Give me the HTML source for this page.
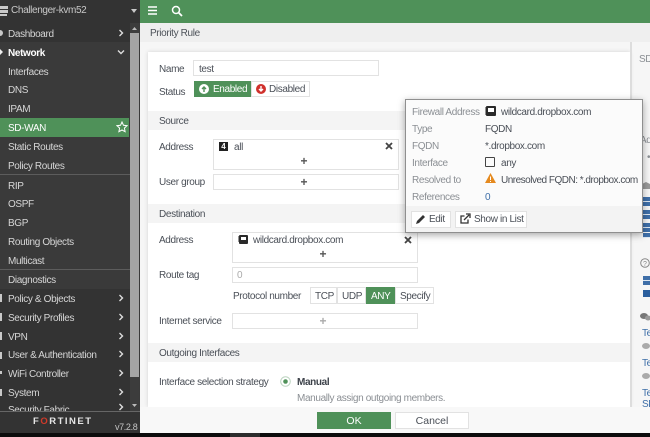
<!DOCTYPE html>
<html><head><meta charset="utf-8">
<style>
html,body{margin:0;padding:0}
body{width:650px;height:437px;overflow:hidden;position:relative;background:#fafafa;font-family:"Liberation Sans",sans-serif;font-size:10px;color:#4a4f57}
.a{position:absolute}
.t{position:absolute;white-space:nowrap;line-height:14px;height:14px;font-size:10px;margin-top:2px;letter-spacing:-.36px}
.n{color:#d6d6d6;left:8px}
.b{position:absolute;box-sizing:border-box;background:#fff;border:1px solid #e2e2e2}
.sec{position:absolute;left:148px;width:482px;height:19px;background:#f4f4f4}
.l{color:#4a4f57}
.g{color:#8b8f94}
.p{position:absolute;color:#555;font-size:12px;font-weight:bold;line-height:12px;width:12px;text-align:center}
.bl{position:absolute;left:643px;width:7px;background:#3f6fa8;border-top:0}
.bl:after{content:"";position:absolute;left:0;right:0;top:4px;height:1px;background:#dfe8f2}
</style></head><body>

<!-- sidebar -->
<div class="a" style="left:0;top:0;width:140px;height:433px;background:#3a3a3a"></div>
<div class="a" style="left:0;top:0;width:140px;height:23px;background:#333"></div>
<div class="a" style="left:0;top:23px;width:130px;height:19px;background:#333"></div>
<div class="a" style="left:0;top:289px;width:130px;height:122px;background:#333"></div>
<div class="a" style="left:130px;top:23px;width:9px;height:388px;background:#3c3c3c"></div>
<div class="a" style="left:130px;top:33px;width:9px;height:344px;background:#a4a4a4"></div>
<div class="a" style="left:0;top:118px;width:129px;height:19px;background:#4f9159"></div>
<div class="a" style="left:0;top:174px;width:130px;height:1px;background:#5c5c5c"></div>
<div class="a" style="left:0;top:269px;width:130px;height:1px;background:#5c5c5c"></div>
<div class="a" style="left:0;top:411px;width:140px;height:22px;background:#333;border-top:1px solid #666;box-sizing:border-box"></div>
<svg class="a" style="left:0;top:3px" width="9" height="20" viewBox="0 0 9 20"><rect x="0" y="3" width="8" height="3" fill="#c8c8c8"/><rect x="0" y="7" width="8" height="3" fill="#c8c8c8"/><rect x="0" y="11" width="7" height="2" fill="#c8c8c8"/></svg>
<div class="t" style="left:11px;top:2px;color:#c9c9c9">Challenger-kvm52</div>
<svg class="a" style="left:130px;top:8px" width="8" height="6"><path d="M1 1h6L4 5z" fill="#c8c8c8"/></svg>
<svg class="a" style="left:131px;top:26px" width="7" height="5"><path d="M1 4h5L3.500 1z" fill="#bbb"/></svg>
<svg class="a" style="left:131px;top:403px" width="7" height="5"><path d="M1 1h5L3.500 4z" fill="#bbb"/></svg>

<div class="t n" style="top:26px">Dashboard</div>
<div class="t n" style="top:45px;color:#fff;font-weight:bold">Network</div>
<div class="t n" style="top:64px">Interfaces</div>
<div class="t n" style="top:82px">DNS</div>
<div class="t n" style="top:101px">IPAM</div>
<div class="t n" style="top:120px;color:#fff">SD-WAN</div>
<div class="t n" style="top:139px">Static Routes</div>
<div class="t n" style="top:158px">Policy Routes</div>
<div class="t n" style="top:178px">RIP</div>
<div class="t n" style="top:196px">OSPF</div>
<div class="t n" style="top:215px">BGP</div>
<div class="t n" style="top:234px">Routing Objects</div>
<div class="t n" style="top:253px">Multicast</div>
<div class="t n" style="top:272px">Diagnostics</div>
<div class="t n" style="top:291px">Policy &amp; Objects</div>
<div class="t n" style="top:310px">Security Profiles</div>
<div class="t n" style="top:329px">VPN</div>
<div class="t n" style="top:347px">User &amp; Authentication</div>
<div class="t n" style="top:366px">WiFi Controller</div>
<div class="t n" style="top:385px">System</div>
<div class="a" style="left:0;top:402px;width:130px;height:9px;overflow:hidden"><div class="t n" style="top:0">Security Fabric</div></div>

<svg class="a" style="left:0;top:28px" width="3" height="10"><circle cx="0" cy="5" r="3" fill="#c8c8c8"/></svg>
<svg class="a" style="left:0;top:49px" width="3" height="6"><path d="M0 0l3 3-3 3z" fill="#eee"/></svg>
<svg class="a" style="left:0;top:294px" width="3" height="9"><rect width="2" height="8" fill="#c8c8c8"/></svg>
<svg class="a" style="left:0;top:313px" width="3" height="9"><rect width="2" height="8" fill="#c8c8c8"/></svg>
<svg class="a" style="left:0;top:332px" width="3" height="9"><rect width="2" height="8" fill="#c8c8c8"/></svg>
<svg class="a" style="left:0;top:352px" width="3" height="9"><rect width="2" height="7" fill="#c8c8c8"/></svg>
<svg class="a" style="left:0;top:371px" width="3" height="6"><rect width="2" height="3" fill="#c8c8c8"/></svg>
<svg class="a" style="left:0;top:389px" width="3" height="8"><rect width="2" height="7" fill="#c8c8c8"/></svg>
<svg class="a" style="left:118px;top:29px" width="6" height="8"><path d="M1.500 1l3 3-3 3" fill="none" stroke="#ddd" stroke-width="1.400"/></svg>
<svg class="a" style="left:117px;top:49px" width="8" height="6"><path d="M1 1.500l3 3 3-3" fill="none" stroke="#ddd" stroke-width="1.400"/></svg>
<svg class="a" style="left:118px;top:294px" width="6" height="8"><path d="M1.500 1l3 3-3 3" fill="none" stroke="#ddd" stroke-width="1.400"/></svg>
<svg class="a" style="left:118px;top:313px" width="6" height="8"><path d="M1.500 1l3 3-3 3" fill="none" stroke="#ddd" stroke-width="1.400"/></svg>
<svg class="a" style="left:118px;top:332px" width="6" height="8"><path d="M1.500 1l3 3-3 3" fill="none" stroke="#ddd" stroke-width="1.400"/></svg>
<svg class="a" style="left:118px;top:350px" width="6" height="8"><path d="M1.500 1l3 3-3 3" fill="none" stroke="#ddd" stroke-width="1.400"/></svg>
<svg class="a" style="left:118px;top:369px" width="6" height="8"><path d="M1.500 1l3 3-3 3" fill="none" stroke="#ddd" stroke-width="1.400"/></svg>
<svg class="a" style="left:118px;top:388px" width="6" height="8"><path d="M1.500 1l3 3-3 3" fill="none" stroke="#ddd" stroke-width="1.400"/></svg>
<svg class="a" style="left:118px;top:403px" width="6" height="8"><path d="M1.500 1l3 3-3 3" fill="none" stroke="#ddd" stroke-width="1.400"/></svg>
<svg class="a" style="left:116px;top:121px" width="12" height="12" viewBox="0 0 12 12"><path d="M6 1l1.500 3.300 3.500.4-2.600 2.400.7 3.600L6 9l-3.100 1.700.7-3.600L1 4.700l3.500-.4z" fill="none" stroke="#fff" stroke-width="1"/></svg>

<!-- FORTINET logo -->
<div class="t" style="left:33px;top:413px;color:#e6e6e6;font-size:9.500px;font-weight:bold;letter-spacing:1.500px">F<span style="color:#d03a2a">O</span>RTINET</div>
<div class="t" style="left:115px;top:418px;color:#c4c4c4;font-size:9px">v7.2.8</div>

<!-- black bottom -->
<div class="a" style="left:0;top:433px;width:650px;height:4px;background:#0c0c0c"></div>
<div class="a" style="left:230px;top:433px;width:30px;height:4px;background:#2c2c2c"></div>

<!-- top bar -->
<div class="a" style="left:140px;top:0;width:510px;height:23px;background:#4f9159"></div>
<svg class="a" style="left:147px;top:5px" width="11" height="11"><path d="M1 2h9M1 5.500h9M1 9h9" stroke="#fff" stroke-width="1.500"/></svg>
<svg class="a" style="left:171px;top:5px" width="12" height="12"><circle cx="5" cy="5" r="3.500" fill="none" stroke="#fff" stroke-width="1.500"/><path d="M7.500 7.500l3.500 3.500" stroke="#fff" stroke-width="1.800"/></svg>

<!-- page header -->
<div class="a" style="left:140px;top:23px;width:510px;height:19px;background:#efefef"></div>
<div class="t" style="left:150px;top:25px;color:#4d5259">Priority Rule</div>
<div class="a" style="left:140px;top:42px;width:510px;height:365px;background:#f6f6f6"></div>

<!-- panel -->
<div class="a" style="left:148px;top:52px;width:482px;height:355px;background:#fff;box-shadow:0 0 4px rgba(0,0,0,.15)"></div>

<div class="t l" style="left:159px;top:61px">Name</div>
<div class="b" style="left:193px;top:60px;width:186px;height:16px"></div>
<div class="t l" style="left:199px;top:61px">test</div>
<div class="t l" style="left:159px;top:84px">Status</div>
<div class="a" style="left:194px;top:81px;width:57px;height:16px;background:#4f9159"></div>
<svg class="a" style="left:199px;top:84px" width="10" height="10"><circle cx="5" cy="5" r="5" fill="#fff"/><path d="M5 8V3M3 5l2-2 2 2" fill="none" stroke="#4f9159" stroke-width="1.400"/></svg>
<div class="t" style="left:213px;top:81px;color:#fff">Enabled</div>
<div class="b" style="left:251px;top:81px;width:59px;height:16px"></div>
<svg class="a" style="left:256px;top:84px" width="10" height="10"><circle cx="5" cy="5" r="5" fill="#d0312d"/><path d="M5 2v5M3 5l2 2 2-2" fill="none" stroke="#fff" stroke-width="1.400"/></svg>
<div class="t l" style="left:269px;top:81px">Disabled</div>

<div class="sec" style="top:111px"></div>
<div class="t l" style="left:159px;top:113px">Source</div>
<div class="t l" style="left:159px;top:139px">Address</div>
<div class="b" style="left:213px;top:139px;width:186px;height:31px"></div>
<div class="a" style="left:219px;top:142px;width:9px;height:9px;background:#222;color:#fff;font-size:8px;line-height:9px;text-align:center;font-weight:bold">4</div>
<div class="t l" style="left:234px;top:139px">all</div>
<svg class="a" style="left:385px;top:142px" width="8" height="8"><path d="M1 1l6 6M7 1L1 7" stroke="#444" stroke-width="1.800"/></svg>
<div class="p" style="left:298px;top:155px">+</div>
<div class="t l" style="left:159px;top:174px">User group</div>
<div class="b" style="left:213px;top:174px;width:186px;height:16px"></div>
<div class="p" style="left:298px;top:176px">+</div>

<div class="sec" style="top:204px"></div>
<div class="t l" style="left:159px;top:206px">Destination</div>
<div class="t l" style="left:159px;top:232px">Address</div>
<div class="b" style="left:232px;top:232px;width:186px;height:31px"></div>
<svg class="a" style="left:238px;top:235px" width="10" height="9"><rect x="1" width="9" height="9" rx="1" fill="#2a2a2a"/><rect x="3" y="2" width="5" height="3" fill="#fff"/><path d="M0 2h1M0 4h1M0 6h1" stroke="#2a2a2a"/></svg>
<div class="t l" style="left:253px;top:232px">wildcard.dropbox.com</div>
<svg class="a" style="left:404px;top:236px" width="8" height="8"><path d="M1 1l6 6M7 1L1 7" stroke="#444" stroke-width="1.800"/></svg>
<div class="p" style="left:317px;top:248px">+</div>
<div class="t l" style="left:159px;top:267px">Route tag</div>
<div class="b" style="left:232px;top:267px;width:186px;height:16px"></div>
<div class="t" style="left:237px;top:267px;color:#aaa">0</div>
<div class="t l" style="left:233px;top:288px">Protocol number</div>
<div class="b" style="left:310px;top:287px;width:27px;height:17px"></div>
<div class="t l" style="left:315px;top:288px">TCP</div>
<div class="b" style="left:337px;top:287px;width:29px;height:17px"></div>
<div class="t l" style="left:342px;top:288px">UDP</div>
<div class="a" style="left:366px;top:287px;width:29px;height:17px;background:#4f9159"></div>
<div class="t" style="left:371px;top:288px;color:#fff">ANY</div>
<div class="b" style="left:395px;top:287px;width:39px;height:17px"></div>
<div class="t l" style="left:400px;top:288px">Specify</div>
<div class="t l" style="left:159px;top:313px">Internet service</div>
<div class="b" style="left:232px;top:313px;width:186px;height:16px"></div>
<div class="p" style="left:317px;top:315px;color:#aaa">+</div>

<div class="sec" style="top:343px"></div>
<div class="t l" style="left:159px;top:345px">Outgoing Interfaces</div>
<div class="t l" style="left:159px;top:374px">Interface selection strategy</div>
<svg class="a" style="left:280px;top:376px" width="11" height="11"><circle cx="5.500" cy="5.500" r="4.800" fill="#fff" stroke="#bcd4c0"/><circle cx="5.500" cy="5.500" r="2.300" fill="#4f9159"/></svg>
<div class="t" style="left:297px;top:374px;font-weight:bold;color:#3d424a">Manual</div>
<div class="t g" style="left:297px;top:390px">Manually assign outgoing members.</div>

<!-- footer -->
<div class="a" style="left:140px;top:407px;width:510px;height:26px;background:#f8f8f8"></div>
<div class="a" style="left:317px;top:412px;width:74px;height:17px;background:#4f9159;color:#fff;text-align:center;line-height:18px;font-size:10.500px">OK</div>
<div class="b" style="left:395px;top:412px;width:74px;height:17px;text-align:center;line-height:16px;font-size:10.500px;color:#4a4f57">Cancel</div>

<!-- right column -->
<div class="a" style="left:630px;top:42px;width:2px;height:365px;background:#ddd"></div>
<div class="t g" style="left:639px;top:51px">SD</div>
<div class="t g" style="left:640px;top:132px">Ad</div>
<div class="t g" style="left:647px;top:149px">•</div>
<svg class="a" style="left:642px;top:181px" width="8" height="9"><path d="M0 8V3l4-2 4 2v5z" fill="#999"/></svg>
<div class="bl" style="top:197px;height:9px"></div>
<div class="bl" style="top:210px;height:9px"></div>
<div class="bl" style="top:223px;height:9px"></div>
<div class="bl" style="top:233px;height:5px"></div>
<svg class="a" style="left:640px;top:258px" width="10" height="10"><circle cx="5" cy="5" r="4.300" fill="none" stroke="#888"/><text x="3" y="8" font-size="7" fill="#888" font-family="Liberation Sans">?</text></svg>
<div class="bl" style="top:276px;height:9px"></div>
<div class="a" style="left:643px;top:290px;width:7px;height:7px;background:#2b5f9e"></div>
<svg class="a" style="left:640px;top:312px" width="10" height="9"><ellipse cx="4" cy="4" rx="4" ry="3" fill="#777"/><ellipse cx="8" cy="6" rx="3" ry="2.500" fill="#999"/></svg>
<div class="t" style="left:642px;top:325px;color:#3f6fa8">Te</div>
<svg class="a" style="left:642px;top:343px" width="8" height="7"><ellipse cx="4" cy="3" rx="4" ry="3" fill="#aaa"/></svg>
<div class="t" style="left:642px;top:355px;color:#3f6fa8">Te</div>
<svg class="a" style="left:642px;top:373px" width="8" height="7"><ellipse cx="4" cy="3" rx="4" ry="3" fill="#aaa"/></svg>
<div class="t" style="left:642px;top:385px;color:#3f6fa8">Te</div>
<div class="t" style="left:642px;top:396px;color:#3f6fa8">SD</div>

<!-- popup -->
<div class="a" style="left:405px;top:99px;width:238px;height:134px;box-sizing:border-box;background:#fbfbfb;border:1px solid #8f8f8f;box-shadow:0 2px 7px rgba(0,0,0,.35)"></div>
<div class="a" style="left:406px;top:206px;width:236px;height:26px;background:#f3f3f3"></div>
<div class="t g" style="left:412px;top:104px">Firewall Address</div>
<svg class="a" style="left:485px;top:106px" width="11" height="10"><rect x="1" width="10" height="10" rx="1" fill="#2a2a2a"/><rect x="3" y="2" width="6" height="4" fill="#fff"/><path d="M0 2h1M0 4h1M0 6h1M0 8h1" stroke="#2a2a2a"/></svg>
<div class="t l" style="left:501px;top:104px">wildcard.dropbox.com</div>
<div class="t g" style="left:412px;top:121px">Type</div>
<div class="t l" style="left:485px;top:121px">FQDN</div>
<div class="t g" style="left:412px;top:138px">FQDN</div>
<div class="t l" style="left:485px;top:138px">*.dropbox.com</div>
<div class="t g" style="left:412px;top:155px">Interface</div>
<div class="a" style="left:485px;top:157px;width:10px;height:10px;box-sizing:border-box;border:1.500px solid #444;border-radius:1px"></div>
<div class="t l" style="left:501px;top:155px">any</div>
<div class="t g" style="left:412px;top:172px">Resolved to</div>
<svg class="a" style="left:485px;top:173px" width="11" height="10"><path d="M5.500 0L11 10H0z" fill="#e58a1f"/><path d="M5.500 3.500v3.500M5.500 8v1" stroke="#fff"/></svg>
<div class="t l" style="left:501px;top:172px;letter-spacing:-.5px">Unresolved FQDN: *.dropbox.com</div>
<div class="t g" style="left:412px;top:189px">References</div>
<div class="t" style="left:485px;top:189px;color:#3f6fa8">0</div>
<div class="b" style="left:411px;top:211px;width:40px;height:17px"></div>
<svg class="a" style="left:416px;top:214px" width="10" height="10"><path d="M0 10l1-3 6-6 2 2-6 6z" fill="#333"/></svg>
<div class="t l" style="left:429px;top:211px">Edit</div>
<div class="b" style="left:455px;top:211px;width:72px;height:17px"></div>
<svg class="a" style="left:460px;top:213px" width="11" height="11"><path d="M8 6.500V10H1V3h3.500" fill="none" stroke="#333" stroke-width="1.300"/><path d="M4 7l5-5M6 1h4v4" fill="none" stroke="#333" stroke-width="1.300"/></svg>
<div class="t l" style="left:474px;top:211px">Show in List</div>

</body></html>
